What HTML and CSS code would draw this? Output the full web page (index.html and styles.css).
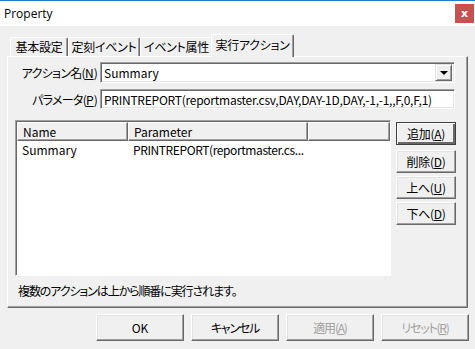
FILE: index.html
```html
<!DOCTYPE html>
<html>
<head>
<meta charset="utf-8">
<link rel="stylesheet" href="styles.css">
</head>
<body>
<div class="window">
  <div class="titlebar">
    <span class="title">Property</span>
    <span class="close">x</span>
  </div>
  <div class="body">
    <div class="tabs">
      <div class="tab t1">基本設定</div>
      <div class="tab t2">定刻イベント</div>
      <div class="tab t3">イベント属性</div>
      <div class="tab active">実行アクション</div>
    </div>
    <div class="panel">
      <div class="form">
        <label class="lbl">アクション名(<u>N</u>)</label>
        <div class="combo"><span class="val">Summary</span><span class="drop"><span class="tri"></span></span></div>
        <label class="lbl lbl2">パラメータ(<u>P</u>)</label>
        <div class="edit">PRINTREPORT(reportmaster.csv,DAY,DAY-1D,DAY,-1,-1,,F,0,F,1)</div>
      </div>
      <div class="listarea">
        <div class="list">
          <div class="header">
            <div class="hcell c1">Name</div>
            <div class="hcell c2">Parameter</div>
            <div class="hcell c3"></div>
          </div>
          <div class="row">
            <div class="cell c1">Summary</div>
            <div class="cell c2">PRINTREPORT(reportmaster.cs...</div>
          </div>
        </div>
        <div class="sidebtns">
          <div class="btn small default">追加(<u>A</u>)</div>
          <div class="btn small">削除(<u>D</u>)</div>
          <div class="btn small">上へ(<u>U</u>)</div>
          <div class="btn small">下へ(<u>D</u>)</div>
        </div>
      </div>
      <div class="hint">複数のアクションは上から順番に実行されます。</div>
    </div>
    <div class="footer">
      <div class="btn big">OK</div>
      <div class="btn big jp">キャンセル</div>
      <div class="btn big jp disabled">適用(<u>A</u>)</div>
      <div class="btn big jp disabled">リセット(<u>R</u>)</div>
    </div>
  </div>
</div>
</body>
</html>
```
FILE: styles.css
```css
* { box-sizing: border-box; }
html, body { margin: 0; padding: 0; }
body {
  width: 475px; height: 349px; overflow: hidden;
  background: #f0f0f0;
  font-family: "Noto Sans CJK JP", "Noto Sans", sans-serif;
  font-feature-settings: "palt";
  font-size: 12px; color: #000;
}
u { text-decoration: underline; text-underline-offset: 1px; }
.window { width: 475px; height: 349px; display: flex; flex-direction: column; }
.titlebar {
  height: 26px; background: #fff; border-top: 1px solid #1c7ed6;
  display: flex; align-items: center; justify-content: space-between;
  padding-left: 4px; padding-right: 1px;
}
.title { font-family: "Open Sans", "Noto Sans", sans-serif; font-size: 12px; color: #000; margin-top: -1px; }
.close {
  width: 19px; height: 19px; background: #c75050; color: #fff;
  font-family: "DejaVu Sans", sans-serif; font-weight: bold; font-size: 11px;
  display: flex; align-items: center; justify-content: center; line-height: 1;
  margin-top: -1px;
}
.body { padding: 8px 0 0 7px; }
.tabs { display: flex; align-items: flex-end; height: 22px; padding-left: 3px; position: relative; z-index: 2; }
.tab {
  height: 19px;
  border-top: 1px solid #fff; border-left: 1px solid #fff; border-right: 1px solid #696969;
  box-shadow: inset -1px 0 0 #a0a0a0;
  line-height: 17px; white-space: nowrap;
  border-radius: 2px 2px 0 0;
  display: flex; justify-content: center; letter-spacing: -0.3px;
}
.t1 { width: 58px; }
.t2 { width: 72px; }
.t3 { width: 73px; }
.tab.active {
  height: 23px; margin-left: -2px; margin-bottom: -1px; width: 83px;
  background: #f0f0f0; line-height: 19px;
}
.panel {
  width: 461px; height: 252px;
  border-top: 1px solid #fff; border-left: 1px solid #fff;
  border-right: 1px solid #696969; border-bottom: 1px solid #696969;
  box-shadow: inset -1px -1px 0 #a0a0a0;
  padding: 5px 0 0 7px;
  position: relative; z-index: 1;
}
.form {
  display: grid; grid-template-columns: 85px 355px; row-gap: 6px; align-items: center;
}
.lbl { text-align: right; padding-right: 3px; white-space: nowrap; letter-spacing: -0.7px; }
.lbl u { letter-spacing: 0; }
.combo, .edit {
  height: 21px; background: #fff;
  border-top: 1px solid #a0a0a0; border-left: 1px solid #a0a0a0;
  border-right: 1px solid #fff; border-bottom: 1px solid #fff;
  box-shadow: inset 1px 1px 0 #696969, inset -1px -1px 0 #e3e3e3;
  display: flex; align-items: center; padding-left: 3px;
  white-space: nowrap; overflow: hidden;
}
.edit { height: 20px; letter-spacing: -0.25px; }
.combo { justify-content: space-between; padding-right: 2px; }
.drop {
  width: 17px; height: 17px; background: #f0f0f0;
  border-top: 1px solid #e3e3e3; border-left: 1px solid #e3e3e3;
  border-right: 1px solid #696969; border-bottom: 1px solid #696969;
  box-shadow: inset 1px 1px 0 #fff, inset -1px -1px 0 #a0a0a0;
  display: flex; align-items: center; justify-content: center;
}
.tri { width: 0; height: 0; border-left: 4px solid transparent; border-right: 4px solid transparent; border-top: 4px solid #000; margin-top: 1px; }
.listarea { display: flex; margin-top: 11px; gap: 5px; align-items: flex-start; }
.list {
  width: 376px; height: 156px; background: #fff;
  border-top: 1px solid #a0a0a0; border-left: 1px solid #a0a0a0;
  border-right: 1px solid #fff; border-bottom: 1px solid #fff;
  box-shadow: inset 1px 1px 0 #696969;
  padding: 1px 0 0 1px;
}
.header { display: flex; height: 19px; }
.hcell {
  background: #f0f0f0; height: 19px; line-height: 17px;
  border-top: 1px solid #fff; border-left: 1px solid #fff;
  border-right: 1px solid #696969; border-bottom: 1px solid #696969;
  box-shadow: inset -1px -1px 0 #a0a0a0;
  padding-left: 5px; white-space: nowrap;
}
.hcell.c1 { width: 111px; }
.hcell.c2 { width: 180px; }
.hcell.c3 { flex: 1; }
.row { display: flex; height: 16px; line-height: 16px; margin-top: 1px; }
.cell { padding-left: 5px; white-space: nowrap; }
.cell.c1 { width: 111px; }
.cell.c2 { width: 180px; letter-spacing: -0.4px; }
.sidebtns { display: flex; flex-direction: column; gap: 3px; margin-top: 2px; }
.btn {
  background: #f0f0f0; display: flex; align-items: center; justify-content: center;
  border-top: 1px solid #fff; border-left: 1px solid #fff;
  border-right: 1px solid #696969; border-bottom: 1px solid #696969;
  box-shadow: inset -1px -1px 0 #a0a0a0, inset 1px 1px 0 #e3e3e3;
  white-space: nowrap;
}
.btn.small { width: 60px; height: 23px; letter-spacing: -0.3px; }
.btn.default { border: 1px solid #404040; box-shadow: inset 1px 1px 0 #fff, inset -2px -2px 0 #696969; margin-bottom: 2px; }
.hint { margin-top: 6px; padding-left: 3px; letter-spacing: -1.1px; }
.footer { display: flex; gap: 7px; justify-content: flex-end; padding-right: 6px; margin-top: 6px; }
.btn.big { width: 88px; height: 27px; }
.btn.jp { letter-spacing: -1.2px; }
.btn.disabled { color: #a0a0a0; }
```
